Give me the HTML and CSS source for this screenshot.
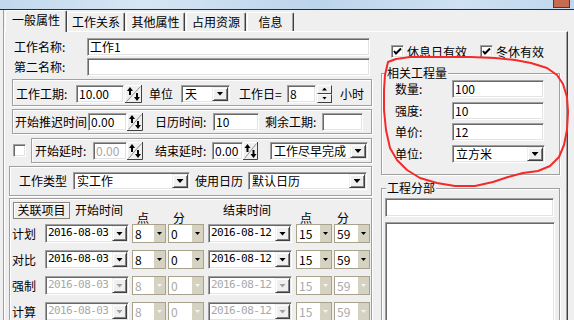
FILE: index.html
```html
<!DOCTYPE html>
<html><head><meta charset="utf-8"><title>工作属性</title><link rel="stylesheet" href="styles.css"></head>
<body>
<div class="screen">
  <div class="topbar"><span class="close"></span></div>
  <div class="win">
    <div class="tabs">
      <div class="tab sel t1">一般属性</div>
      <div class="tab t2">工作关系</div>
      <div class="tab t3">其他属性</div>
      <div class="tab t4">占用资源</div>
      <div class="tab t5">信息</div>
    </div>
    <div class="panel">
      <div class="lcol">
        <div class="row nrow first"><span class="lbl w73">工作名称:</span><div class="edit w283">工作1</div></div>
        <div class="row nrow"><span class="lbl w73">第二名称:</span><div class="edit w283"></div></div>

        <div class="box b1">
          <span class="lbl w60">工作工期:</span>
          <div class="edit w48">10.00</div>
          <svg class="spin ml1" width="17" height="18" viewBox="0 0 17 18"><rect x="0" y="0" width="17" height="18" fill="#f0eff0"/><path d="M0.5 17.5V0.5H16.5" stroke="#fff" fill="none"/><path d="M16.5 0V17.5H0" stroke="#404040" fill="none"/><path d="M1.5 16.5L15.5 1.5" stroke="#909090"/><path d="M5 5V10" stroke="#000" stroke-width="2"/><path d="M2 6L5 2L8 6Z" fill="#000"/><path d="M12 8V13" stroke="#000" stroke-width="2"/><path d="M9 12L12 16L15 12Z" fill="#000"/></svg>
          <span class="lbl ml7 w32">单位</span>
          <div class="combo w49"><span class="ct">天</span><span class="btn"><i class="tri"></i></span></div>
          <span class="lbl ml9 w48">工作日=</span>
          <div class="edit w29">8</div>
          <div class="updown ml1"><span class="ub"><i class="tu"></i></span><span class="ub"><i class="td"></i></span></div>
          <span class="lbl ml8">小时</span>
        </div>

        <div class="box b2">
          <span class="lbl w73">开始推迟时间</span>
          <div class="edit w39">0.00</div>
          <svg class="spin" width="16" height="18" viewBox="0 0 16 18"><rect x="0" y="0" width="16" height="18" fill="#f0eff0"/><path d="M0.5 17.5V0.5H15.5" stroke="#fff" fill="none"/><path d="M15.5 0V17.5H0" stroke="#404040" fill="none"/><path d="M1.5 16.5L14.5 1.5" stroke="#909090"/><path d="M5 5V10" stroke="#000" stroke-width="2"/><path d="M2 6L5 2L8 6Z" fill="#000"/><path d="M11 8V13" stroke="#000" stroke-width="2"/><path d="M8 12L11 16L14 12Z" fill="#000"/></svg>
          <span class="lbl ml12 w58">日历时间:</span>
          <div class="edit w46">10</div>
          <span class="lbl ml6 w57">剩余工期:</span>
          <div class="edit w41"></div>
        </div>

        <div class="row r3">
          <span class="cb ml4"></span>
          <div class="box b3">
            <span class="lbl w58">开始延时:</span>
            <div class="edit w34 dis">0.00</div>
            <svg class="spin" width="16" height="18" viewBox="0 0 16 18"><rect x="0" y="0" width="16" height="18" fill="#f0eff0"/><path d="M0.5 17.5V0.5H15.5" stroke="#fff" fill="none"/><path d="M15.5 0V17.5H0" stroke="#404040" fill="none"/><path d="M1.5 16.5L14.5 1.5" stroke="#909090"/><path d="M5 5V10" stroke="#000" stroke-width="2"/><path d="M2 6L5 2L8 6Z" fill="#000"/><path d="M11 8V13" stroke="#000" stroke-width="2"/><path d="M8 12L11 16L14 12Z" fill="#000"/></svg>
            <span class="lbl ml12 w57">结束延时:</span>
            <div class="edit w31">0.00</div>
            <svg class="spin" width="15" height="18" viewBox="0 0 15 18"><rect x="0" y="0" width="15" height="18" fill="#f0eff0"/><path d="M0.5 17.5V0.5H14.5" stroke="#fff" fill="none"/><path d="M14.5 0V17.5H0" stroke="#404040" fill="none"/><path d="M1.5 16.5L13.5 1.5" stroke="#909090"/><path d="M4.5 5V10" stroke="#000" stroke-width="2"/><path d="M1.5 6L4.5 2L7.5 6Z" fill="#000"/><path d="M10.5 8V13" stroke="#000" stroke-width="2"/><path d="M7.5 12L10.5 16L13.5 12Z" fill="#000"/></svg>
            <div class="combo w98 ml12"><span class="ct">工作尽早完成</span><span class="btn"><i class="tri"></i></span></div>
          </div>
        </div>

        <div class="box b4">
          <span class="lbl w54">工作类型</span>
          <div class="combo w117"><span class="ct">实工作</span><span class="btn"><i class="tri"></i></span></div>
          <span class="lbl ml5 w53">使用日历</span>
          <div class="combo w119"><span class="ct">默认日历</span><span class="btn"><i class="tri"></i></span></div>
        </div>

        <div class="box b5">
          <div class="hrow">
            <span class="pbtn">关联项目</span>
            <span class="lbl ml5 w62">开始时间</span>
            <span class="lbl w36 low">点</span>
            <span class="lbl w50 low">分</span>
            <span class="lbl w77">结束时间</span>
            <span class="lbl w37 low">点</span>
            <span class="lbl low">分</span>
          </div>
          <div class="trow">
            <span class="lbl w33">计划</span>
            <div class="combo dc w84"><span class="ct">2016-08-03</span><span class="btn"><i class="tri"></i></span></div>
            <div class="sc ml3 w34"><span class="ct">8</span><span class="sb"><i class="stri"></i></span></div>
            <div class="sc ml2 w36"><span class="ct">0</span><span class="sb"><i class="stri"></i></span></div>
            <div class="combo dc ml4 w84"><span class="ct">2016-08-12</span><span class="btn"><i class="tri"></i></span></div>
            <div class="sc ml4 w36"><span class="ct">15</span><span class="sb"><i class="stri"></i></span></div>
            <div class="sc ml2 w36"><span class="ct">59</span><span class="sb"><i class="stri"></i></span></div>
          </div>
          <div class="trow">
            <span class="lbl w33">对比</span>
            <div class="combo dc w84"><span class="ct">2016-08-03</span><span class="btn"><i class="tri"></i></span></div>
            <div class="sc ml3 w34"><span class="ct">8</span><span class="sb"><i class="stri"></i></span></div>
            <div class="sc ml2 w36"><span class="ct">0</span><span class="sb"><i class="stri"></i></span></div>
            <div class="combo dc ml4 w84"><span class="ct">2016-08-12</span><span class="btn"><i class="tri"></i></span></div>
            <div class="sc ml4 w36"><span class="ct">15</span><span class="sb"><i class="stri"></i></span></div>
            <div class="sc ml2 w36"><span class="ct">59</span><span class="sb"><i class="stri"></i></span></div>
          </div>
          <div class="trow dis">
            <span class="lbl w33">强制</span>
            <div class="combo dc w84"><span class="ct">2016-08-03</span><span class="btn"><i class="tri"></i></span></div>
            <div class="sc ml3 w34"><span class="ct">8</span><span class="sb"><i class="stri"></i></span></div>
            <div class="sc ml2 w36"><span class="ct">0</span><span class="sb"><i class="stri"></i></span></div>
            <div class="combo dc ml4 w84"><span class="ct">2016-08-12</span><span class="btn"><i class="tri"></i></span></div>
            <div class="sc ml4 w36"><span class="ct">15</span><span class="sb"><i class="stri"></i></span></div>
            <div class="sc ml2 w36"><span class="ct">59</span><span class="sb"><i class="stri"></i></span></div>
          </div>
          <div class="trow dis">
            <span class="lbl w33">计算</span>
            <div class="combo dc w84"><span class="ct">2016-08-03</span><span class="btn"><i class="tri"></i></span></div>
            <div class="sc ml3 w34"><span class="ct">8</span><span class="sb"><i class="stri"></i></span></div>
            <div class="sc ml2 w36"><span class="ct">0</span><span class="sb"><i class="stri"></i></span></div>
            <div class="combo dc ml4 w84"><span class="ct">2016-08-12</span><span class="btn"><i class="tri"></i></span></div>
            <div class="sc ml4 w36"><span class="ct">15</span><span class="sb"><i class="stri"></i></span></div>
            <div class="sc ml2 w36"><span class="ct">59</span><span class="sb"><i class="stri"></i></span></div>
          </div>
        </div>
      </div>

      <div class="rcol">
        <div class="cbrow">
          <span class="cb ml10 on"><svg width="9" height="9" viewBox="0 0 9 9"><path d="M1 4L3 6.5L8 1.5" stroke="#000" stroke-width="2" fill="none"/></svg></span>
          <span class="lbl ml3 w60">休息日有效</span>
          <span class="cb ml13 on"><svg width="9" height="9" viewBox="0 0 9 9"><path d="M1 4L3 6.5L8 1.5" stroke="#000" stroke-width="2" fill="none"/></svg></span>
          <span class="lbl ml3">冬休有效</span>
        </div>
        <div class="grp g1">
          <span class="gt">相关工程量</span>
          <div class="frow"><span class="lbl w57">数量:</span><div class="edit w92">100</div></div>
          <div class="frow m4"><span class="lbl w57">强度:</span><div class="edit w92">10</div></div>
          <div class="frow m3"><span class="lbl w57">单价:</span><div class="edit w92">12</div></div>
          <div class="frow m4"><span class="lbl w57">单位:</span><div class="combo w93"><span class="ct">立方米</span><span class="btn"><i class="tri"></i></span></div></div>
        </div>
        <div class="grp g2">
          <span class="gt">工程分部</span>
          <div class="edit w169 fe"></div>
          <div class="edit lb"></div>
        </div>
      </div>
    </div>
  </div>
  <svg class="mark" width="574" height="320" viewBox="0 0 574 320"><polyline fill="none" stroke="#f42a2a" stroke-width="2" stroke-linejoin="round" stroke-linecap="round" points="388,62 396,59 410,57 440,57 470,57 495,58 515,60 531,63 547,68 557,75 563,84 567,97 568,112 567,130 564,145 559,157 550,166 538,171 523,173 508,177 493,182 475,186 455,186 437,183 420,178 407,170 397,160 390,148 386,130 384,110 384,90 385,75 388,62"/></svg>
</div>
</body></html>
```

FILE: styles.css
```css
*{box-sizing:border-box;margin:0;padding:0}
html,body{width:574px;height:320px;overflow:hidden}
body{font:12px/14px "Noto Sans CJK SC","Liberation Sans",sans-serif;color:#000;background:#f0eff0}
.screen{position:relative;width:574px;height:320px;overflow:hidden;background:#f0eff0}
.topbar{height:10px;background:linear-gradient(90deg,#c2d8ed,#d6e6f4 25%,#bcd4eb 55%,#cfe1f2 80%,#c0d7ed);border-bottom:1px solid #2c2c2c;display:flex;justify-content:flex-end;padding-right:4px}
.close{width:17px;height:8px;background:#c86a4e;border:1px solid #6d2c1c;border-top:0}
.win{margin-left:3px;border-left:1px solid #a0a0a0;height:310px;display:flex;flex-direction:column}
.tabs{display:flex;align-items:flex-end;height:21px;margin-left:1px;position:relative;z-index:1}
.tab{height:19px;border:1px solid #fff;border-right-color:#404040;border-bottom:0;box-shadow:inset -1px 0 #a0a0a0;border-radius:2px 2px 0 0;text-align:center;line-height:17px;background:#f0eff0;white-space:nowrap}
.tab.sel{height:22px;margin-bottom:-1px}
.t1{width:62px}.t2{width:58px}.t3{width:59px;margin-left:1px}.t4{width:60px;margin-left:1px}.t5{width:47px;margin-left:1px}
.panel{flex:1;width:564px;border-top:1px solid #fff;border-left:1px solid #fff;border-right:1px solid #404040;box-shadow:inset -1px 0 #a0a0a0;display:flex;padding-left:4px}
.lcol{width:364px;flex:none}
.rcol{width:180px;flex:none;margin-left:8px}
.row{display:flex;align-items:center}
.nrow{padding-left:5px;margin-top:2px}
.nrow.first{margin-top:6px}
.lbl{flex:none;white-space:nowrap;line-height:14px}
.edit{flex:none;height:18px;background:#fff;border:1px solid;border-color:#a0a0a0 #fff #fff #a0a0a0;box-shadow:inset 1px 1px #696969,inset -1px -1px #e3e3e3;padding:1px 2px;line-height:14px;white-space:nowrap;font-family:"Noto Sans CJK SC","DejaVu Sans",sans-serif}
.edit.dis{color:#a8a8a8}
.box{display:flex;align-items:center;border:1px solid #a0a0a0;box-shadow:inset 1px 1px #fff,1px 1px #fff}
.b1{margin:3px 0 0 3px;width:360px;height:27px;padding:2px 0 0 3px}
.b2{margin:3px 0 0 3px;width:360px;height:25px;padding:1px 0 0 2px}
.r3{margin-top:4px}
.b3{margin-left:5px;width:341px;height:25px;padding:1px 0 0 3px}
.b4{margin-top:3px;width:363px;height:30px;padding:0 0 0 9px}
.b5{margin-top:2px;width:363px;height:130px;padding:3px 0 0 3px;display:block}
.spin{flex:none;display:block}
.combo{flex:none;display:flex;height:18px;background:#fff;border:1px solid;border-color:#a0a0a0 #fff #fff #a0a0a0;box-shadow:inset 1px 1px #696969,inset -1px -1px #e3e3e3;padding:1px}
.ct{flex:1;padding-left:2px;line-height:14px;white-space:nowrap}
.btn{flex:none;width:16px;height:14px;background:#f0eff0;border:1px solid;border-color:#f0eff0 #404040 #404040 #f0eff0;box-shadow:inset 1px 1px #fff,inset -1px -1px #808080;display:flex;align-items:center;justify-content:center}
.tri{display:block;width:7px;height:4px;background:#000;clip-path:polygon(0 0,100% 0,50% 100%)}
.updown{flex:none;width:15px;height:18px;display:flex;flex-direction:column}
.ub{height:9px;background:#f0eff0;border:1px solid;border-color:#fff #404040 #404040 #fff;display:flex;align-items:center;justify-content:center}
.tu{display:block;width:5px;height:3px;background:#000;clip-path:polygon(50% 0,100% 100%,0 100%)}
.td{display:block;width:5px;height:3px;background:#000;clip-path:polygon(0 0,100% 0,50% 100%)}
.cb{flex:none;width:13px;height:13px;background:#fff;border:1px solid;border-color:#a0a0a0 #fff #fff #a0a0a0;box-shadow:inset 1px 1px #696969,inset -1px -1px #e3e3e3;display:flex;align-items:center;justify-content:center}
.cb svg{display:block}
.hrow{display:flex;align-items:center;height:16px}
.pbtn{flex:none;width:57px;height:17px;border:1px solid #8c8478;box-shadow:inset 1px 1px #fff;background:#f0eff0;text-align:center;line-height:14px}
.low{align-self:flex-end;margin-bottom:-7px}
.trow{display:flex;align-items:center;margin-top:7px;margin-left:-1px}
.hrow+.trow{margin-top:6px}
.dc{height:19px}
.dc .ct{font-family:"DejaVu Sans Mono","Liberation Mono",monospace;font-size:11px;letter-spacing:-0.6px;padding-left:1px}
.dc .btn{width:15px;height:15px}
.sc{flex:none;display:flex;height:19px;background:#fff;border:1px solid #a8a18c}
.sc .ct{padding-left:2px;line-height:17px}
.sb{flex:none;width:11px;background:#d6d2c2;display:flex;align-items:center;justify-content:center}
.stri{display:block;width:5px;height:3px;background:#000;clip-path:polygon(0 0,100% 0,50% 100%)}
.trow.dis .ct{color:#a8a8a8}
.trow.dis .tri{background:#a0a0a0}
.trow.dis .stri{background:#f4f4f4}
.cbrow{display:flex;align-items:center;height:13px;margin-top:13px}
.grp{display:flex;flex-direction:column;border:1px solid #a0a0a0;box-shadow:inset 1px 1px #fff,1px 1px #fff;width:179px}
.g1{margin-top:15px;height:102px;padding-left:13px}
.g2{margin-top:13px;height:150px;padding-left:3px}
.gt{align-self:flex-start;margin:-8px 0 0 -9px;padding:0 1px;background:#f0eff0;line-height:14px}
.g2 .gt{margin-left:1px}
.frow{display:flex;align-items:center}
.m4{margin-top:4px}.m3{margin-top:3px}
.fe{margin-top:3px;height:19px}
.lb{margin-top:5px;width:170px;height:110px}
.mark{position:absolute;left:0;top:0;pointer-events:none}
.ml1{margin-left:1px}.ml2{margin-left:2px}.ml3{margin-left:3px}.ml4{margin-left:4px}.ml5{margin-left:5px}.ml6{margin-left:6px}.ml7{margin-left:7px}.ml8{margin-left:8px}.ml9{margin-left:9px}.ml10{margin-left:10px}.ml12{margin-left:12px}.ml13{margin-left:13px}
.w29{width:29px}.w31{width:31px}.w32{width:32px}.w33{width:33px}.w34{width:34px}.w36{width:36px}.w37{width:37px}.w39{width:39px}.w41{width:41px}.w46{width:46px}.w48{width:48px}.w49{width:49px}.w50{width:50px}.w53{width:53px}.w54{width:54px}.w57{width:57px}.w58{width:58px}.w60{width:60px}.w62{width:62px}.w73{width:73px}.w77{width:77px}.w84{width:84px}.w92{width:92px}.w93{width:93px}.w98{width:98px}.w117{width:117px}.w119{width:119px}.w169{width:169px}.w283{width:283px}
```
